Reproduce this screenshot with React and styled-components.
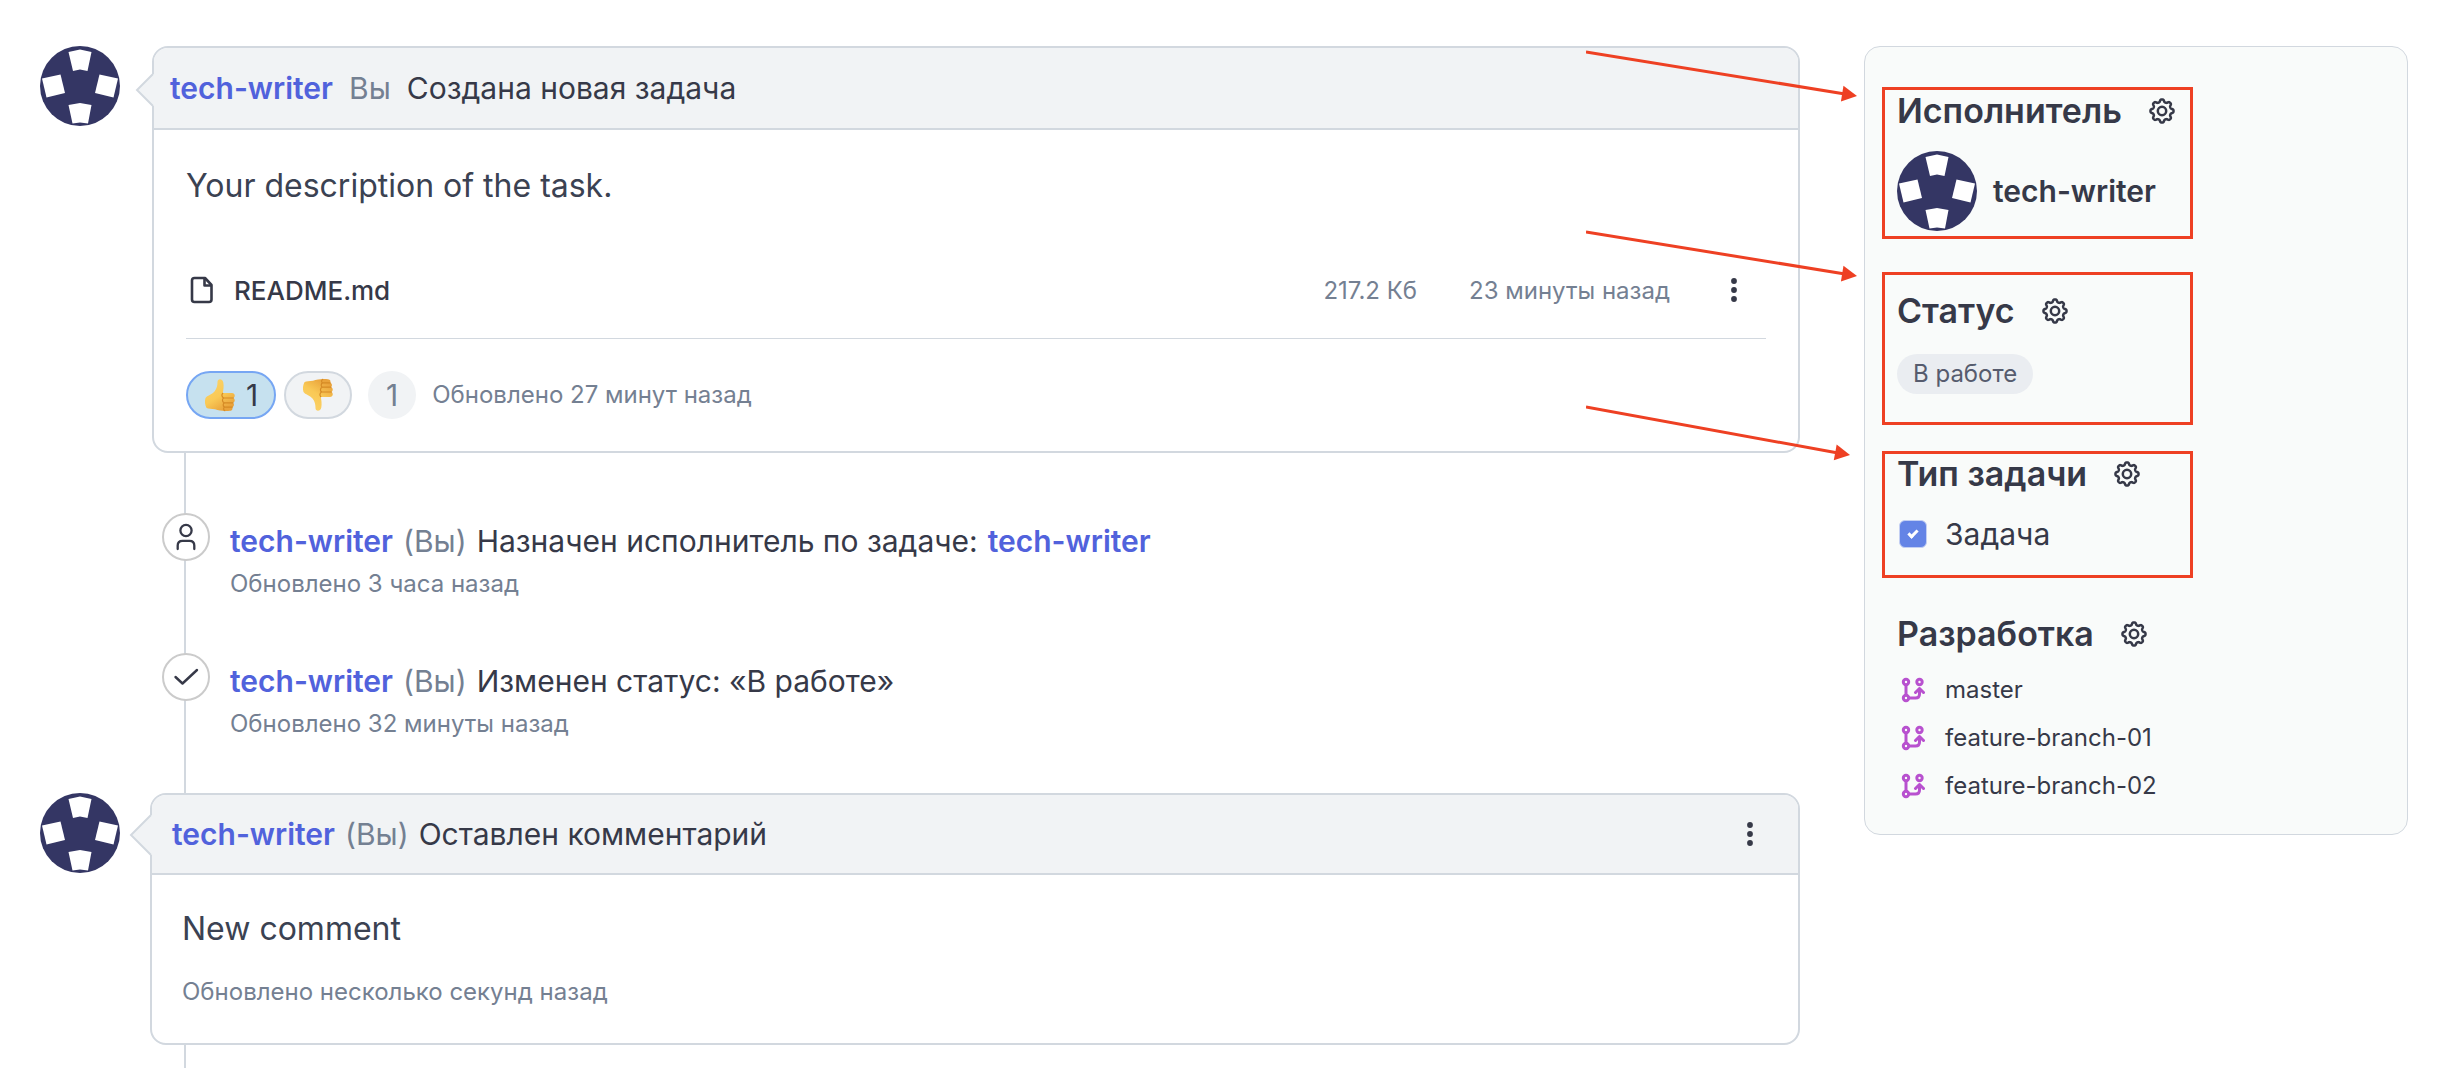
import React, { useState } from 'react';
import styled, { createGlobalStyle, css } from 'styled-components';

const colors = {
    text: '#363948',
    body: '#3b4252',
    muted: '#748092',
    link: '#5162dc',
    border: '#d2d8df',
    header: '#f1f3f5',
    panel: '#f9fbfa',
    avatar: '#343664',
    branch: '#b851cf',
    callout: '#ee4023'
};

const GlobalStyle = createGlobalStyle`
    *, *::before, *::after {
        box-sizing: border-box;
    }

    body {
        margin: 0;
        background: #fff;
        color: ${colors.text};
        font-family: Inter, 'Liberation Sans', sans-serif;
        font-size: 30px;
    }

    button {
        padding: 0;
        border: 0;
        background: none;
        color: inherit;
        font: inherit;
        cursor: pointer;
    }

    h2, p, ul {
        margin: 0;
        padding: 0;
        list-style: none;
    }

    a {
        color: inherit;
        text-decoration: none;
    }

    svg {
        display: block;
        flex: none;
    }
`;

const Page = styled.div`
    display: flex;
    align-items: flex-start;
    gap: 64px;
    padding: 46px 32px 0 40px;
`;

const Timeline = styled.main`
    flex: 1;
    min-width: 0;
`;

const Post = styled.article`
    display: flex;
    align-items: flex-start;
    gap: ${({ $comment }) => ($comment ? 30 : 32)}px;
`;

const Card = styled.div`
    position: relative;
    flex: 1;
    min-width: 0;
    border: 2px solid ${colors.border};
    border-radius: 16px;
    background: #fff;
`;

const CardHeader = styled.header`
    display: flex;
    align-items: center;
    justify-content: space-between;
    height: ${({ $comment }) => ($comment ? 80 : 82)}px;
    padding: ${({ $comment }) => ($comment ? '0 24px 0 20px' : '0 16px')};
    border-bottom: 2px solid ${colors.border};
    border-radius: 14px 14px 0 0;
    background: ${colors.header};
`;

const CardBody = styled.div`
    padding: ${({ $comment }) => ($comment ? '30px' : '32px')};
`;

const TailIcon = styled.svg`
    position: absolute;
    top: ${({ $top }) => $top}px;
    right: 100%;
    overflow: visible;
`;

const Headline = styled.p`
    display: flex;
    flex-wrap: wrap;
    gap: ${({ $wide }) => ($wide ? 16 : 10)}px;
    line-height: 44px;
`;

const UserLink = styled.a`
    color: ${colors.link};
    font-weight: 600;
`;

const Muted = styled.span`
    color: ${colors.muted};
`;

const Message = styled.p`
    color: ${colors.body};
    font-size: 32px;
    line-height: 48px;
`;

const Updated = styled.p`
    color: ${colors.muted};
    font-size: 24px;
    line-height: 42px;
`;

const CommentUpdated = styled(Updated)`
    margin-top: 18px;
`;

const FileRow = styled.div`
    display: flex;
    align-items: center;
    height: 97px;
    margin-top: 32px;
    padding-right: 8px;
    border-bottom: 1px solid ${colors.border};
`;

const FileLink = styled.a`
    display: flex;
    align-items: center;
    gap: 16px;
    margin-right: auto;
    font-size: 26px;
    font-weight: 500;
`;

const FileMeta = styled.span`
    margin-right: ${({ $last }) => ($last ? 40 : 52)}px;
    color: ${colors.muted};
    font-size: 24px;
`;

const MenuButton = styled.button`
    display: grid;
    place-items: center;
    width: 48px;
    height: 48px;
`;

const Reactions = styled.div`
    display: flex;
    align-items: center;
    gap: 8px;
    margin-top: 32px;
`;

const ReactionButton = styled.button`
    display: flex;
    align-items: center;
    gap: 10px;
    height: 48px;
    padding: 0 16px;
    border: 2px solid ${({ $active }) => ($active ? '#76a6f3' : colors.border)};
    border-radius: 24px;
    background: ${({ $active }) => ($active ? '#c6e1ef' : colors.header)};
`;

const ReactionTotal = styled.span`
    display: grid;
    place-items: center;
    width: 48px;
    height: 48px;
    margin: 0 8px;
    border-radius: 50%;
    background: ${colors.header};
    color: ${colors.muted};
`;

/* the left border is the rail that joins the cards */
const EventList = styled.ul`
    display: flex;
    flex-direction: column;
    gap: 48px;
    margin-left: 144px;
    padding: 60px 0 48px;
    border-left: 2px solid ${colors.border};
`;

const Event = styled.li`
    display: flex;
    align-items: flex-start;
    gap: 20px;
    margin-left: -24px;
`;

const EventMarker = styled.span`
    display: grid;
    place-items: center;
    width: 48px;
    height: 48px;
    border: 2px solid #cbcbcb;
    border-radius: 50%;
    background: #fff;
`;

const EventText = styled.div`
    padding-top: 6px;
`;

const RailEnd = styled.div`
    height: 23px;
    margin-left: 144px;
    border-left: 2px solid ${colors.border};
`;

const Sidebar = styled.aside`
    position: relative;
    flex: none;
    display: flex;
    flex-direction: column;
    gap: 56px;
    width: 544px;
    padding: 40px 32px 24px;
    border: 1px solid ${colors.border};
    border-radius: 16px;
    background: ${colors.panel};
`;

const SidebarSection = styled.section`
    position: relative;
`;

const SectionHeading = styled.div`
    display: flex;
    align-items: center;
    gap: 26px;
    margin-bottom: ${({ $space }) => $space}px;
`;

const SectionTitle = styled.h2`
    font-size: 34px;
    font-weight: 600;
    line-height: 48px;
`;

const Callout = styled.div`
    position: absolute;
    top: ${({ $top }) => $top}px;
    left: -15px;
    width: 311px;
    height: ${({ $height }) => $height}px;
    border: 3px solid ${colors.callout};
    pointer-events: none;
`;

const CalloutArrows = styled.svg`
    position: absolute;
    top: 0;
    right: 100%;
    pointer-events: none;
`;

const Assignee = styled.a`
    display: flex;
    align-items: center;
    gap: 16px;
    font-weight: 600;
`;

const StatusBadge = styled.span`
    display: inline-block;
    padding: 0 16px;
    border-radius: 20px;
    background: #eaedf1;
    color: #565c6e;
    font-size: 24px;
    line-height: 40px;
    vertical-align: top;
`;

const CheckLabel = styled.label`
    display: flex;
    align-items: center;
    gap: 18px;
    padding-left: 2px;
    line-height: 40px;
`;

const checkMark = css`
    &:checked::after {
        content: '';
        width: 6px;
        height: 10px;
        margin-bottom: 3px;
        border: solid #fff;
        border-width: 0 3px 3px 0;
        transform: rotate(45deg);
    }
`;

const Checkbox = styled.input`
    appearance: none;
    display: grid;
    place-items: center;
    width: 28px;
    height: 28px;
    margin: 0;
    border: 1px solid #c3cff3;
    border-radius: 6px;
    background: ${({ checked }) => (checked ? '#6484e6' : '#fff')};
    ${checkMark}
`;

const BranchLink = styled.a`
    display: flex;
    align-items: center;
    gap: 20px;
    padding-left: 4px;
    font-size: 24px;
    line-height: 48px;
`;

const Avatar = () => (
    <svg width="80" height="80" viewBox="0 0 80 80" aria-hidden="true">
        <circle cx="40" cy="40" r="40" fill={colors.avatar} />
        <g fill="#fff">
            <path d="M28.5 6 40 3.5 51.5 6 47.5 25 40 23.5 33 25Z" />
            <path d="M28.5 59 40 57 51.5 59 48 77.5 40 76.5 32.5 77.5Z" />
            <path d="M2 32.5 20.5 28.5 25 47 6.5 51.5Z" />
            <path d="M78 32.5 59.5 28.5 55 47 73.5 51.5Z" />
        </g>
    </svg>
);

const Tail = ({ top, size }) => (
    <TailIcon
        $top={top}
        width={size + 2}
        height={size * 2}
        viewBox={`0 0 ${size + 2} ${size * 2}`}
        aria-hidden="true"
    >
        <path
            d={`M${size + 3} 0H${size + 1}L1 ${size}L${size + 1} ${size * 2}H${size + 3}Z`}
            fill={colors.header}
        />
        <path
            d={`M${size + 1} 0L1 ${size}L${size + 1} ${size * 2}`}
            fill="none"
            stroke={colors.border}
            strokeWidth="2"
        />
    </TailIcon>
);

const DotsIcon = () => (
    <svg width="6" height="24" viewBox="0 0 6 24" fill={colors.text} aria-hidden="true">
        <circle cx="3" cy="3" r="2.9" />
        <circle cx="3" cy="12" r="2.9" />
        <circle cx="3" cy="21" r="2.9" />
    </svg>
);

const FileIcon = () => (
    <svg width="32" height="32" viewBox="0 0 32 32" fill="none" stroke={colors.text} strokeWidth="2.6" strokeLinejoin="round" aria-hidden="true">
        <path d="M8.5 4H19L25.5 11V25.5A2.5 2.5 0 0 1 23 28H8.5A2.5 2.5 0 0 1 6 25.5V6.5A2.5 2.5 0 0 1 8.5 4Z" />
        <path d="M18.5 4.5V11.5H25" />
    </svg>
);

const UserIcon = () => (
    <svg width="28" height="28" viewBox="0 0 28 28" fill="none" stroke={colors.text} strokeWidth="2.3" strokeLinecap="round" aria-hidden="true">
        <circle cx="14" cy="7.5" r="5.6" />
        <path d="M5.7 26V22.5C5.7 19.5 7.8 17.8 10.5 17.8H17.5C20.2 17.8 22.3 19.5 22.3 22.5V26" />
    </svg>
);

const CheckIcon = () => (
    <svg width="28" height="28" viewBox="0 0 28 28" fill="none" stroke={colors.text} strokeWidth="2.4" strokeLinecap="round" strokeLinejoin="round" aria-hidden="true">
        <path d="M3.5 14 10.5 20.5 25 7" />
    </svg>
);

const BranchIcon = () => (
    <svg width="24" height="26" viewBox="0 0 24 26" fill="none" stroke={colors.branch} strokeWidth="3" strokeLinecap="round" strokeLinejoin="round" aria-hidden="true">
        <circle cx="5" cy="5" r="2.7" />
        <circle cx="5" cy="21" r="2.7" />
        <circle cx="18.5" cy="5" r="2.7" />
        <path d="M5 8V18M8 21H14.5C17.5 21 18.5 19.5 18.5 17V12" />
        <path d="M14.5 15.5 18.5 11.5 22.5 15.5" />
    </svg>
);

// eight soft teeth round a circle
const gearPath = Array.from({ length: 160 }, (_, i) => {
    const angle = (i / 160) * Math.PI * 2;
    const radius = 10.3 + 1.3 * Math.tanh(1.8 * Math.cos(8 * angle));
    const x = 14 + radius * Math.sin(angle);
    const y = 14 - radius * Math.cos(angle);
    return `${i ? 'L' : 'M'}${x.toFixed(2)} ${y.toFixed(2)}`;
}).join('') + 'Z';

const GearIcon = () => (
    <svg width="28" height="28" viewBox="0 0 28 28" fill="none" stroke={colors.text} strokeWidth="2.5" strokeLinejoin="round" aria-hidden="true">
        <path d={gearPath} />
        <circle cx="14" cy="14" r="4.2" />
    </svg>
);

const ThumbIcon = ({ down }) => (
    <svg width="32" height="34" viewBox="0 0 32 34" aria-hidden="true">
        <defs>
            <linearGradient id={down ? 'skin-down' : 'skin-up'} x1="0" y1="0" x2="0.6" y2="1">
                <stop offset="0" stopColor="#fcd46c" />
                <stop offset="0.6" stopColor="#f9c956" />
                <stop offset="1" stopColor="#e9a23a" />
            </linearGradient>
        </defs>
        <g transform={down ? 'matrix(1 0 0 -1 0 34)' : undefined}>
            <path
                d="M1.5 20C3 17.5 8 16.5 10.5 13.5C13 10.5 13.5 7 13.5 3.8C13.5 .5 18.5 .3 19.3 4.5C20 8 19.4 12 18.8 15H28C31.5 15 31.5 19.5 29 20C31.5 20.8 31.2 24.4 28.8 24.8C30.7 25.8 30.2 28.8 28 29.2C29.2 30.5 28.2 32.7 26 32.8C20 33.4 15 32.6 11 31.3C7.5 30.6 4.5 31 2.6 30C.8 27 .5 23 1.5 20Z"
                fill={`url(#${down ? 'skin-down' : 'skin-up'})`}
            />
            <path
                d="M18.8 15.3C17.5 16.5 17.6 18.8 19.5 19.9M29.5 20H20C17.8 20.5 18 24 20.2 24.7M29 24.8H20.5C18.7 25.3 18.8 28.4 20.6 29.1M28.3 29.2H20.5C19.2 29.7 19.3 32 20.8 32.7"
                fill="none"
                stroke="#d58a25"
                strokeWidth="1.2"
                strokeLinecap="round"
            />
        </g>
    </svg>
);

// start and tip of every arrow: [x1, y1, x2, y2]
const arrows = [
    [0, 5, 271, 49],
    [0, 185, 271, 229],
    [0, 360, 264, 408]
];

const Arrow = ({ coords: [x1, y1, x2, y2] }) => {
    const angle = (Math.atan2(y2 - y1, x2 - x1) * 180) / Math.PI;
    return (
        <g>
            <line x1={x1} y1={y1} x2={x2 - 12} y2={y2 - 2} stroke={colors.callout} strokeWidth="3" />
            <path d="M0 0-15 -8V8Z" fill={colors.callout} transform={`translate(${x2} ${y2}) rotate(${angle})`} />
        </g>
    );
};

const events = [
    { icon: UserIcon, text: 'Назначен исполнитель по задаче:', target: 'tech-writer', updated: 'Обновлено 3 часа назад' },
    { icon: CheckIcon, text: 'Изменен статус: «В работе»', updated: 'Обновлено 32 минуты назад' }
];

const branches = ['master', 'feature-branch-01', 'feature-branch-02'];

const Section = ({ title, space, callout, children }) => (
    <SidebarSection>
        <SectionHeading $space={space}>
            <SectionTitle>{title}</SectionTitle>
            <button type="button" aria-label={`Настроить: ${title}`}>
                <GearIcon />
            </button>
        </SectionHeading>
        {children}
        {callout && <Callout $top={callout.top} $height={callout.height} />}
    </SidebarSection>
);

const App = () => {
    const [isTask, setIsTask] = useState(true);

    return (
        <>
            <GlobalStyle />
            <Page>
                <Timeline>
                    <Post>
                        <Avatar />
                        <Card>
                            <Tail top={26} size={16} />
                            <CardHeader>
                                <Headline $wide>
                                    <UserLink href="#user">tech-writer</UserLink>
                                    <Muted>Вы</Muted>
                                    <span>Создана новая задача</span>
                                </Headline>
                            </CardHeader>
                            <CardBody>
                                <Message>Your description of the task.</Message>
                                <FileRow>
                                    <FileLink href="#readme">
                                        <FileIcon />
                                        README.md
                                    </FileLink>
                                    <FileMeta>217.2 Кб</FileMeta>
                                    <FileMeta $last>23 минуты назад</FileMeta>
                                    <MenuButton type="button" aria-label="Действия с файлом">
                                        <DotsIcon />
                                    </MenuButton>
                                </FileRow>
                                <Reactions>
                                    <ReactionButton type="button" $active aria-label="Нравится">
                                        <ThumbIcon />
                                        1
                                    </ReactionButton>
                                    <ReactionButton type="button" aria-label="Не нравится">
                                        <ThumbIcon down />
                                    </ReactionButton>
                                    <ReactionTotal>1</ReactionTotal>
                                    <Updated>Обновлено 27 минут назад</Updated>
                                </Reactions>
                            </CardBody>
                        </Card>
                    </Post>

                    <EventList>
                        {events.map(({ icon: Icon, text, target, updated }) => (
                            <Event key={text}>
                                <EventMarker>
                                    <Icon />
                                </EventMarker>
                                <EventText>
                                    <Headline>
                                        <UserLink href="#user">tech-writer</UserLink>
                                        <Muted>(Вы)</Muted>
                                        <span>{text}</span>
                                        {target && <UserLink href="#user">{target}</UserLink>}
                                    </Headline>
                                    <Updated>{updated}</Updated>
                                </EventText>
                            </Event>
                        ))}
                    </EventList>

                    <Post $comment>
                        <Avatar />
                        <Card>
                            <Tail top={20} size={20} />
                            <CardHeader $comment>
                                <Headline>
                                    <UserLink href="#user">tech-writer</UserLink>
                                    <Muted>(Вы)</Muted>
                                    <span>Оставлен комментарий</span>
                                </Headline>
                                <MenuButton type="button" aria-label="Действия с комментарием">
                                    <DotsIcon />
                                </MenuButton>
                            </CardHeader>
                            <CardBody $comment>
                                <Message>New comment</Message>
                                <CommentUpdated>Обновлено несколько секунд назад</CommentUpdated>
                            </CardBody>
                        </Card>
                    </Post>
                    <RailEnd />
                </Timeline>

                <Sidebar>
                    <Section title="Исполнитель" space={16} callout={{ top: 0, height: 152 }}>
                        <Assignee href="#user">
                            <Avatar />
                            tech-writer
                        </Assignee>
                    </Section>
                    <Section title="Статус" space={19} callout={{ top: -15, height: 153 }}>
                        <StatusBadge>В работе</StatusBadge>
                    </Section>
                    <Section title="Тип задачи" space={16} callout={{ top: 1, height: 127 }}>
                        <CheckLabel>
                            <Checkbox
                                type="checkbox"
                                checked={isTask}
                                onChange={(e) => setIsTask(e.target.checked)}
                            />
                            Задача
                        </CheckLabel>
                    </Section>
                    <Section title="Разработка" space={8}>
                        <ul>
                            {branches.map((branch) => (
                                <li key={branch}>
                                    <BranchLink href={`#${branch}`}>
                                        <BranchIcon />
                                        {branch}
                                    </BranchLink>
                                </li>
                            ))}
                        </ul>
                    </Section>
                    <CalloutArrows width="279" height="430" viewBox="0 0 279 430" aria-hidden="true">
                        {arrows.map((coords) => (
                            <Arrow key={coords[1]} coords={coords} />
                        ))}
                    </CalloutArrows>
                </Sidebar>
            </Page>
        </>
    );
};

export default App;
